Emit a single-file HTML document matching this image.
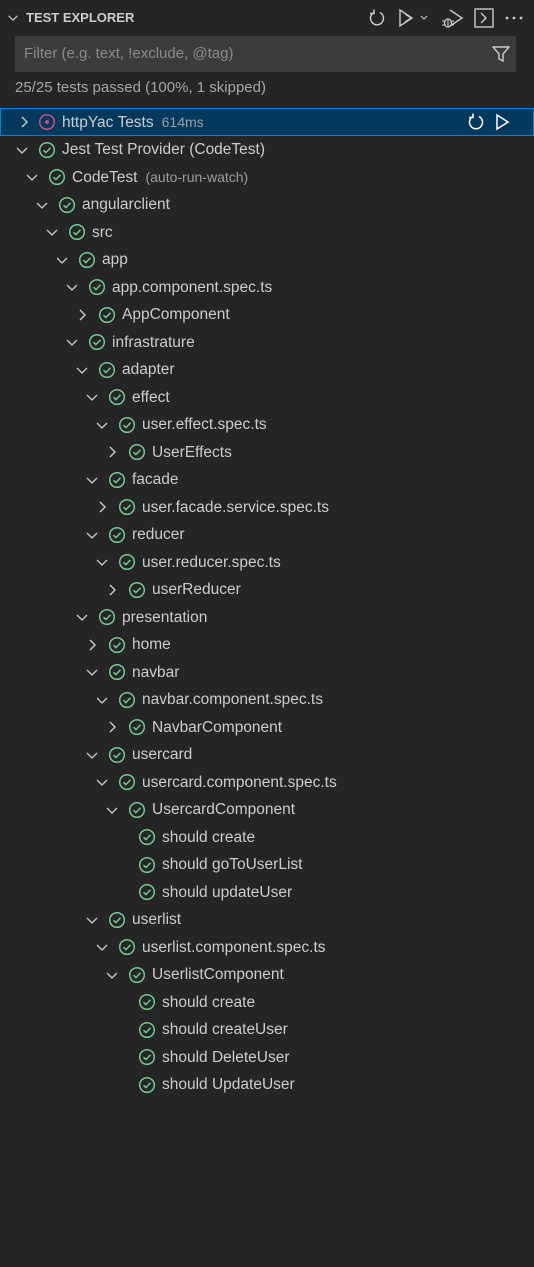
<!DOCTYPE html>
<html><head><meta charset="utf-8"><style>
body{margin:0;width:534px;height:1267px;background:#252526;font-family:"Segoe UI","Liberation Sans",sans-serif;color:#cccccc;overflow:hidden;position:relative}
.hdr{position:absolute;top:0;left:0;width:534px;height:35px}
.hdr .t{position:absolute;left:26px;top:10px;font-size:13px;font-weight:bold;color:#cccccc;letter-spacing:0}
.filter{position:absolute;left:15px;top:36px;width:501px;height:36px;background:#3c3c3c}
.filter span{position:absolute;left:9px;top:9px;font-size:15px;color:#8b8b8b}
.status{position:absolute;left:15px;top:79px;font-size:15px;color:#a6a6a6}
.row{position:absolute;left:0;width:534px;height:27.5px}
.row .c{position:absolute;top:6px;width:16px;height:16px}
.row .i{position:absolute;top:5px;width:18px;height:18px}
.row .x{position:absolute;top:5.5px;font-size:15.5px;white-space:nowrap;color:#cccccc}
.row .d{color:#9d9d9d;font-size:14px;margin-left:8px}
.sel{background:#04395e;outline:1px solid #007fd4;outline-offset:-1px}
</style></head><body>
<div class="hdr">
<svg style="position:absolute;left:6px;top:11px" width="14" height="14" viewBox="0 0 16 16"><path d="M3 5.5l5 5 5-5" fill="none" stroke="#ccc" stroke-width="1.3"/></svg>
<div class="t">TEST EXPLORER</div>
<svg style="position:absolute;left:367px;top:8px" width="20" height="20" viewBox="0 0 20 20"><path d="M7 4.5A6.5 6.5 0 1 0 13 4.5" fill="none" stroke="#ccc" stroke-width="1.4"/><path d="M7 1.5v4h-4" fill="none" stroke="#ccc" stroke-width="1.4"/></svg>
<svg style="position:absolute;left:397px;top:8px" width="34" height="20" viewBox="0 0 34 20"><path d="M3 2l12 8-12 8z" fill="none" stroke="#ccc" stroke-width="1.4"/><path d="M8 6l6 4-6 4" fill="none" stroke="#ccc" stroke-width="1.2"/><path d="M24 8l3 3 3-3" fill="none" stroke="#ccc" stroke-width="1.1"/></svg>
<svg style="position:absolute;left:440px;top:8px" width="24" height="22" viewBox="0 0 24 22"><path d="M10 2l12 8-12 8" fill="none" stroke="#ccc" stroke-width="1.4"/><ellipse cx="8" cy="15" rx="3.5" ry="4" fill="none" stroke="#ccc" stroke-width="1.3"/><path d="M2 13h3M11 13h3M2 17h3M11 17h3M8 11v8" stroke="#ccc" stroke-width="1.1"/></svg>
<svg style="position:absolute;left:473px;top:7px" width="22" height="22" viewBox="0 0 22 22"><rect x="2" y="2" width="18" height="18" fill="none" stroke="#ccc" stroke-width="1.4"/><path d="M8 6l5 5-5 5" fill="none" stroke="#ccc" stroke-width="1.4"/></svg>
<svg style="position:absolute;left:504px;top:15px" width="20" height="6" viewBox="0 0 20 6"><circle cx="3" cy="3" r="1.4" fill="#ccc"/><circle cx="10" cy="3" r="1.4" fill="#ccc"/><circle cx="17" cy="3" r="1.4" fill="#ccc"/></svg>
</div>
<div class="filter"><span>Filter (e.g. text, !exclude, @tag)</span>
<svg style="position:absolute;left:477px;top:9px" width="18" height="18" viewBox="0 0 18 18"><path d="M1 2h16l-6 7v7l-4-2v-5z" fill="none" stroke="#ccc" stroke-width="1.4"/></svg></div>
<div class="status">25/25 tests passed (100%, 1 skipped)</div>
<div id="tree"></div>
<script>
var rows=[
["httpYac Tests",0,">","614ms"],
["Jest Test Provider (CodeTest)",0,"v"],
["CodeTest",1,"v","(auto-run-watch)"],
["angularclient",2,"v"],["src",3,"v"],["app",4,"v"],
["app.component.spec.ts",5,"v"],["AppComponent",6,">"],
["infrastrature",5,"v"],["adapter",6,"v"],["effect",7,"v"],
["user.effect.spec.ts",8,"v"],["UserEffects",9,">"],
["facade",7,"v"],["user.facade.service.spec.ts",8,">"],
["reducer",7,"v"],["user.reducer.spec.ts",8,"v"],["userReducer",9,">"],
["presentation",6,"v"],["home",7,">"],["navbar",7,"v"],
["navbar.component.spec.ts",8,"v"],["NavbarComponent",9,">"],
["usercard",7,"v"],["usercard.component.spec.ts",8,"v"],["UsercardComponent",9,"v"],
["should create",10,""],["should goToUserList",10,""],["should updateUser",10,""],
["userlist",7,"v"],["userlist.component.spec.ts",8,"v"],["UserlistComponent",9,"v"],
["should create",10,""],["should createUser",10,""],["should DeleteUser",10,""],["should UpdateUser",10,""]];
var h="";
rows.forEach(function(r,i){
var top=108+27.5*i,d=r[1],cx=14+10*d,ix=38+10*d,tx=62+10*d;
if(i==0){cx+=2;}
h+='<div class="row'+(i==0?' sel':'')+'" style="top:'+top+'px">';
if(r[2]==">")h+='<svg class="c" style="left:'+cx+'px" viewBox="0 0 16 16"><path d="M6 3l5 5-5 5" fill="none" stroke="#ccc" stroke-width="1.4"/></svg>';
if(r[2]=="v")h+='<svg class="c" style="left:'+cx+'px" viewBox="0 0 16 16"><path d="M3 6l5 5 5-5" fill="none" stroke="#ccc" stroke-width="1.3"/></svg>';
if(i==0)h+='<svg class="i" style="left:'+ix+'px" viewBox="0 0 18 18"><circle cx="9" cy="9" r="7.3" fill="none" stroke="#c74e87" stroke-width="1.5"/><circle cx="9" cy="9" r="2" fill="#c74e87"/></svg>';
else h+='<svg class="i" style="left:'+ix+'px" viewBox="0 0 18 18"><circle cx="9" cy="9" r="7.3" fill="none" stroke="#73c991" stroke-width="1.5"/><path d="M5.5 9.2l2.4 2.4 4.6-4.8" fill="none" stroke="#73c991" stroke-width="1.5"/></svg>';
h+='<div class="x" style="left:'+tx+'px">'+r[0]+(r[3]?'<span class="d">'+r[3]+'</span>':'')+'</div>';
if(i==0)h+='<svg style="position:absolute;left:466px;top:4px" width="20" height="20" viewBox="0 0 20 20"><path d="M7 4.5A6.5 6.5 0 1 0 13 4.5" fill="none" stroke="#fff" stroke-width="1.5"/><path d="M7 1.5v4h-4" fill="none" stroke="#fff" stroke-width="1.5"/></svg><svg style="position:absolute;left:494px;top:4px" width="18" height="20" viewBox="0 0 18 20"><path d="M3 3l11 7-11 7z" fill="none" stroke="#fff" stroke-width="1.5"/></svg>';
h+='</div>';});
document.getElementById("tree").innerHTML=h;
</script>
</body></html>
